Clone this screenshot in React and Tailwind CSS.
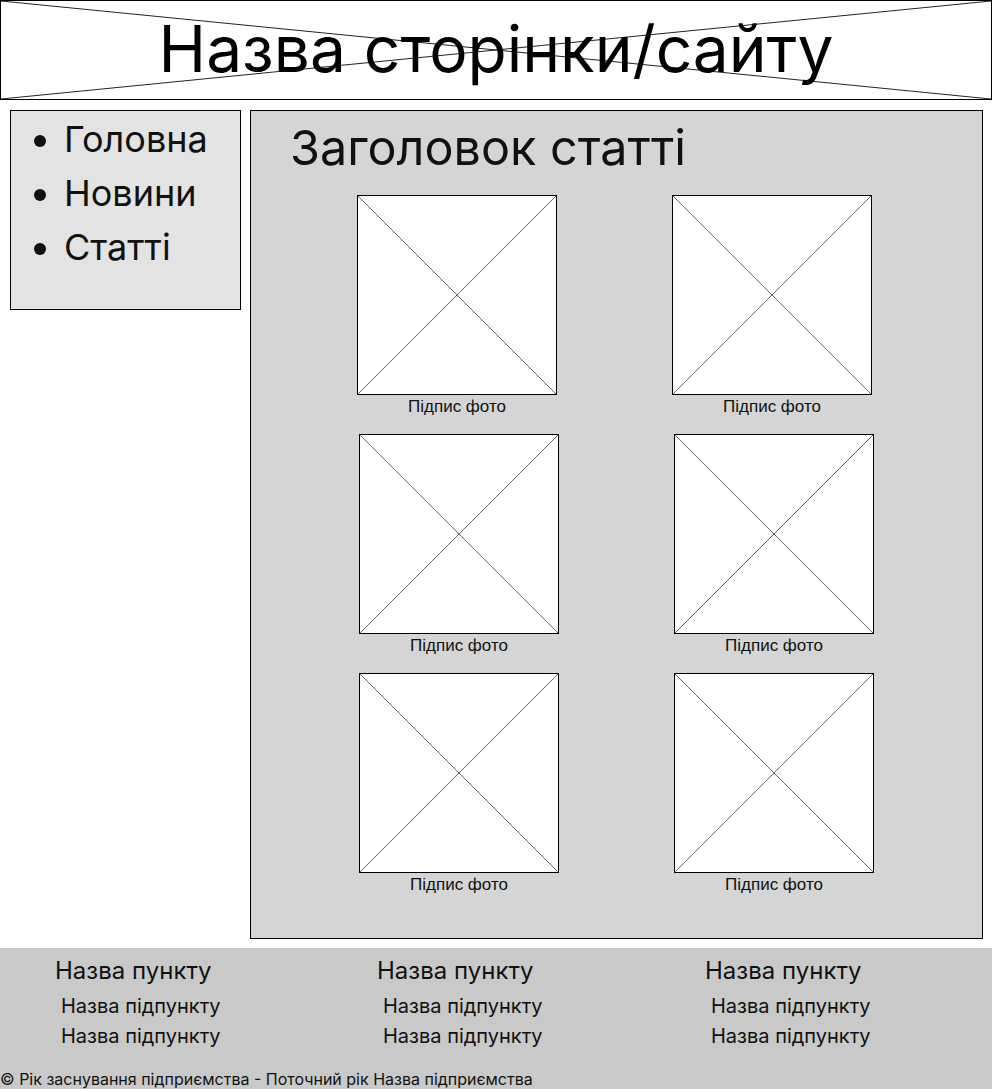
import React from 'react'

const inter = { fontFamily: 'Inter, "Noto Sans", sans-serif' }

function Cross({ stroke = '#555' }) {
  return (
    <svg className="absolute inset-0 w-full h-full" viewBox="0 0 100 100" preserveAspectRatio="none">
      <line x1="0" y1="0" x2="100" y2="100" stroke={stroke} strokeWidth="1" vectorEffect="non-scaling-stroke" />
      <line x1="100" y1="0" x2="0" y2="100" stroke={stroke} strokeWidth="1" vectorEffect="non-scaling-stroke" />
    </svg>
  )
}

function Photo({ className = '' }) {
  return (
    <div className={`flex flex-col items-center w-[200px] ${className}`}>
      <div className="relative w-[200px] h-[200px] bg-white border border-black">
        <Cross stroke="#666" />
      </div>
      <span className="mt-[3px] text-[17px] leading-[18px] text-[#111] font-['Liberation_Sans',Arial,sans-serif]">Підпис фото</span>
    </div>
  )
}

function FooterCol({ className = '' }) {
  return (
    <div className={`flex flex-col ${className}`}>
      <span className="text-[24px] leading-[34px] text-[#111]">Назва пункту</span>
      <span className="mt-[3px] ml-[6px] text-[20px] leading-[30px] text-[#111]">Назва підпункту</span>
      <span className="ml-[6px] text-[20px] leading-[30px] text-[#111]">Назва підпункту</span>
    </div>
  )
}

export default function App() {
  return (
    <div className="w-[992px] min-h-[1089px] bg-white" style={inter}>
      {/* Header */}
      <header className="relative h-[100px] border border-black bg-white flex items-center justify-center">
        <Cross stroke="#222" />
        <h1 className="relative text-[64px] leading-none font-normal text-black pb-[2px]">Назва сторінки/сайту</h1>
      </header>

      <div className="flex gap-[9px] px-[10px] pt-[10px]">
        {/* Sidebar */}
        <nav className="w-[231px] h-[200px] shrink-0 bg-[#e3e3e3] border border-black">
          <ul className="list-disc pl-[53px] pt-[1px] text-[36px] leading-[54px] text-[#111]">
            <li>Головна</li>
            <li>Новини</li>
            <li>Статті</li>
          </ul>
        </nav>

        {/* Main */}
        <main className="w-[733px] h-[829px] shrink-0 bg-[#d5d5d5] border border-black">
          <h2 className="pl-[39px] pt-[9px] text-[48.5px] leading-[56px] font-normal text-[#111]">Заголовок статті</h2>
          <div className="flex flex-col gap-[18px] mt-[19px]">
            <div className="flex gap-[115px] pl-[106px]">
              <Photo />
              <Photo />
            </div>
            <div className="flex gap-[115px] pl-[108px]">
              <Photo />
              <Photo />
            </div>
            <div className="flex gap-[115px] pl-[108px]">
              <Photo />
              <Photo />
            </div>
          </div>
        </main>
      </div>

      {/* Footer */}
      <footer className="mt-[9px] bg-[#c9c9c9] h-[141px] flex flex-col">
        <div className="flex pl-[55px] pt-[6px]">
          <FooterCol className="w-[322px]" />
          <FooterCol className="w-[328px]" />
          <FooterCol />
        </div>
        <p className="mt-auto text-[16px] leading-[20px] text-[#111]">© Рік заснування підприємства - Поточний рік Назва підприємства</p>
      </footer>
    </div>
  )
}
